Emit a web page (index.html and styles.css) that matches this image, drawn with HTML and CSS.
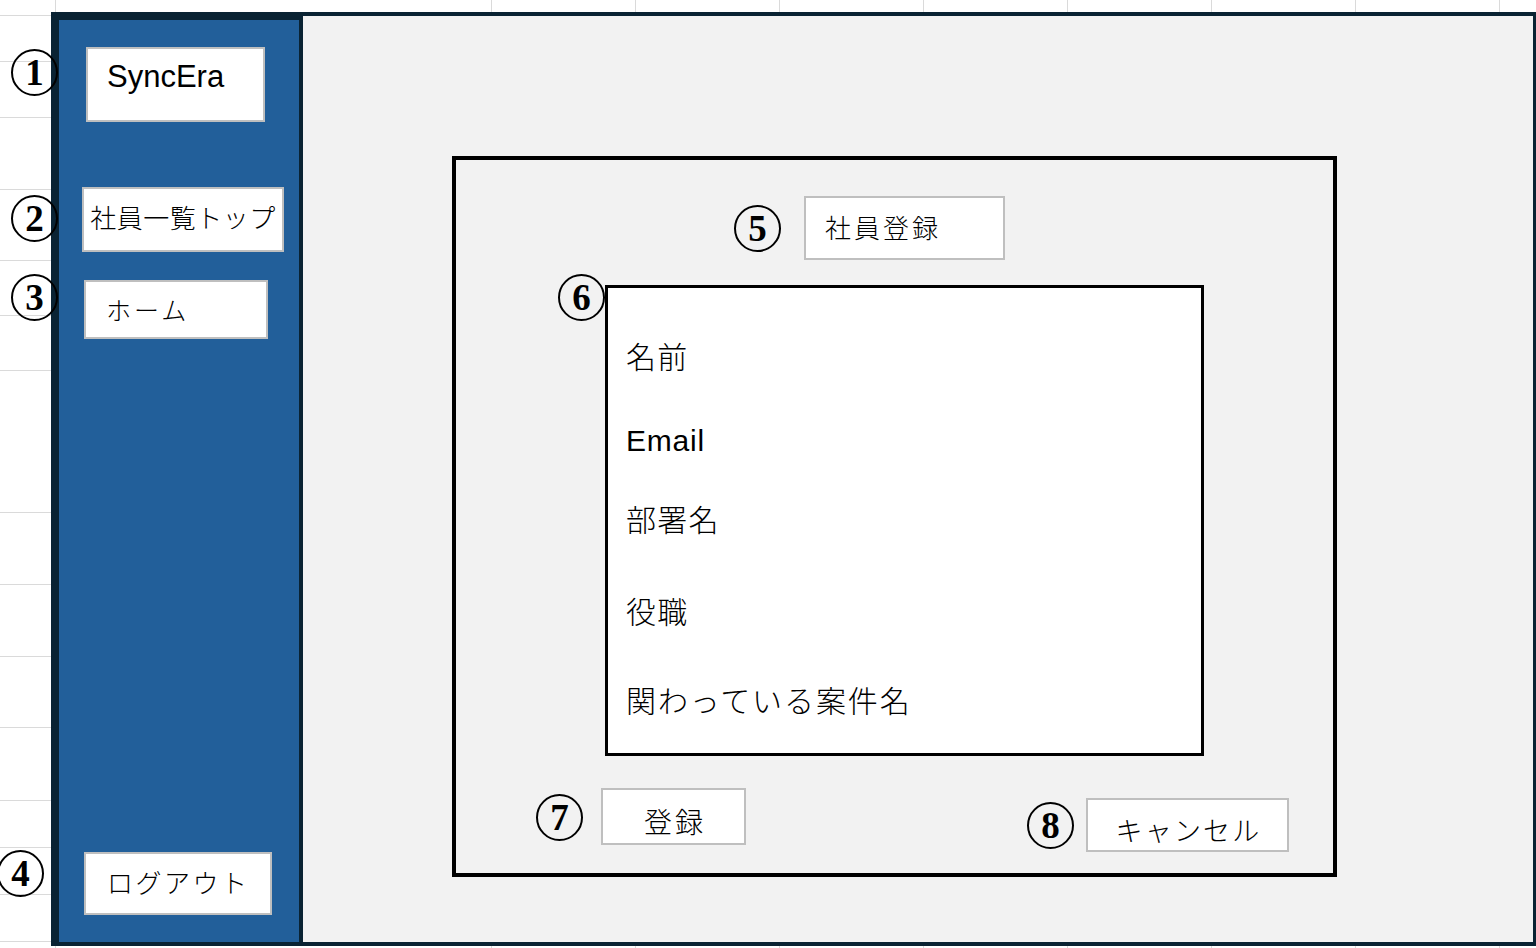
FILE: index.html
```html
<!DOCTYPE html>
<html lang="ja">
<head>
<meta charset="utf-8">
<title>SyncEra 社員登録</title>
<link rel="stylesheet" href="styles.css">
</head>
<body>
  <div class="frame">
    <aside class="sidebar">
      <div class="box logo"><span class="badge b1">1</span>SyncEra</div>
      <div class="box nav-list"><span class="badge b2">2</span>社員一覧トップ</div>
      <div class="box nav-home"><span class="badge b3">3</span>ホーム</div>
      <div class="box nav-logout"><span class="badge b4">4</span>ログアウト</div>
    </aside>
    <main class="main">
      <section class="dialog">
        <div class="title-row">
          <div class="box title-box"><span class="badge b5">5</span>社員登録</div>
        </div>
        <div class="form-box">
          <span class="badge b6">6</span>
          <div class="field f-name">名前</div>
          <div class="field f-email">Email</div>
          <div class="field f-dept">部署名</div>
          <div class="field f-role">役職</div>
          <div class="field f-proj">関わっている案件名</div>
        </div>
        <div class="btn-row">
          <div class="box btn-register"><span class="badge b7">7</span>登録</div>
          <div class="box btn-cancel"><span class="badge b8">8</span>キャンセル</div>
        </div>
      </section>
    </main>
  </div>
</body>
</html>
```
FILE: styles.css
```css
* { box-sizing: border-box; }

html, body {
  margin: 0;
  padding: 0;
}

body {
  width: 1536px;
  height: 948px;
  overflow: hidden;
  font-family: "Liberation Sans", "Noto Sans CJK JP", sans-serif;
  color: #000;
  background-color: #fff;
  /* spreadsheet grid lines: 15 rows + 9 columns */
  background-image:
    linear-gradient(#dadada, #dadada), linear-gradient(#dadada, #dadada),
    linear-gradient(#dadada, #dadada), linear-gradient(#dadada, #dadada),
    linear-gradient(#dadada, #dadada), linear-gradient(#dadada, #dadada),
    linear-gradient(#dadada, #dadada), linear-gradient(#dadada, #dadada),
    linear-gradient(#dadada, #dadada), linear-gradient(#dadada, #dadada),
    linear-gradient(#dadada, #dadada), linear-gradient(#dadada, #dadada),
    linear-gradient(#dadada, #dadada), linear-gradient(#dadada, #dadada),
    linear-gradient(#dadada, #dadada),
    linear-gradient(#dadada, #dadada), linear-gradient(#dadada, #dadada),
    linear-gradient(#dadada, #dadada), linear-gradient(#dadada, #dadada),
    linear-gradient(#dadada, #dadada), linear-gradient(#dadada, #dadada),
    linear-gradient(#dadada, #dadada), linear-gradient(#dadada, #dadada),
    linear-gradient(#dadada, #dadada);
  background-repeat: no-repeat;
  background-size:
    100% 1px, 100% 1px, 100% 1px, 100% 1px, 100% 1px,
    100% 1px, 100% 1px, 100% 1px, 100% 1px, 100% 1px,
    100% 1px, 100% 1px, 100% 1px, 100% 1px, 100% 1px,
    1px 100%, 1px 100%, 1px 100%, 1px 100%, 1px 100%,
    1px 100%, 1px 100%, 1px 100%, 1px 100%;
  background-position:
    0 15px, 0 61px, 0 117px, 0 189px, 0 260px,
    0 315px, 0 370px, 0 512px, 0 584px, 0 656px,
    0 727px, 0 800px, 0 847px, 0 894px, 0 941px,
    55px 0, 491px 0, 635px 0, 779px 0, 923px 0,
    1067px 0, 1211px 0, 1355px 0, 1499px 0;
}

.frame {
  margin: 12px 0 0 51px;
  width: 1485px;
  height: 934px;
  border: 4px solid #0a2333;
  border-right-width: 3px;
  display: flex;
}

/* ---------- sidebar ---------- */
.sidebar {
  width: 248px;
  flex: none;
  background: #225f9a;
  border: 4px solid #0a2333;
  border-bottom: 0;
  display: flex;
  flex-direction: column;
  align-items: flex-start;
}

.box {
  position: relative;
  background: #fff;
  border: 2px solid #bfbfbf;
  white-space: nowrap;
}

.logo {
  width: 179px;
  height: 75px;
  margin: 27px 0 0 27px;
  padding: 10px 0 0 19px;
  font-size: 31px;
  line-height: 36px;
}

.nav-list {
  width: 202px;
  height: 65px;
  margin: 65px 0 0 23px;
  text-align: center;
  font-size: 26px;
  line-height: 61px;
  letter-spacing: 0.5px;
  font-weight: 300;
}

.nav-home {
  width: 184px;
  height: 59px;
  margin: 28px 0 0 25px;
  padding: 4px 0 0 20px;
  font-size: 25px;
  line-height: 51px;
  letter-spacing: 3px;
  font-weight: 300;
}

.nav-logout {
  width: 188px;
  height: 63px;
  margin: auto 0 27px 25px;
  padding: 2px 0 0 21px;
  font-size: 26px;
  line-height: 57px;
  letter-spacing: 2.5px;
  font-weight: 300;
}

/* ---------- main ---------- */
.main {
  flex: 1;
  background: #f2f2f2;
  padding: 140px 0 0 149px;
}

.dialog {
  width: 885px;
  height: 721px;
  border: 4px solid #000;
  display: flex;
  flex-direction: column;
  align-items: flex-start;
}

.title-row {
  margin-top: 36px;
  padding-left: 348px;
}

.title-box {
  width: 201px;
  height: 64px;
  padding: 2px 0 0 19px;
  font-size: 26px;
  line-height: 58px;
  letter-spacing: 3px;
  font-weight: 300;
}

.form-box {
  position: relative;
  margin: 25px 0 0 149px;
  width: 599px;
  height: 471px;
  border: 3px solid #000;
  background: #fff;
  padding: 50px 0 0 18px;
}

.field {
  font-size: 30px;
  line-height: 40px;
  letter-spacing: 1.2px;
  font-weight: 300;
}

.f-email { margin-top: 43px; letter-spacing: 0.8px; font-weight: 400; }
.f-dept { margin-top: 40px; }
.f-role { margin-top: 52px; }
.f-proj { margin-top: 49px; letter-spacing: 1.9px; }

.btn-row {
  display: flex;
  align-items: flex-start;
  margin-top: 32px;
  padding-left: 145px;
}

.btn-register {
  width: 145px;
  height: 57px;
  padding: 14px 0 0 3px;
  text-align: center;
  font-size: 28px;
  line-height: 40px;
  letter-spacing: 3px;
  font-weight: 300;
}

.btn-cancel {
  width: 203px;
  height: 54px;
  margin: 10px 0 0 340px;
  padding: 12px 0 0 2px;
  text-align: center;
  font-size: 27px;
  line-height: 40px;
  letter-spacing: 2.2px;
  font-weight: 300;
}

/* ---------- annotation badges ---------- */
.badge {
  position: absolute;
  width: 47px;
  height: 47px;
  border: 2px solid #000;
  border-radius: 50%;
  display: flex;
  align-items: center;
  justify-content: center;
  font-family: "Liberation Serif", serif;
  font-weight: 700;
  font-size: 37px;
  line-height: 1;
  letter-spacing: 0;
  color: #000;
  padding: 0;
}

.b1 { left: -77px; top: 0; }
.b2 { left: -73px; top: 6px; }
.b3 { left: -75px; top: -8px; }
.b4 { left: -89px; top: -4px; }
.b5 { left: -72px; top: 7px; }
.b6 { left: -50px; top: -14px; }
.b7 { left: -67px; top: 4px; }
.b8 { left: -61px; top: 2px; }
```
